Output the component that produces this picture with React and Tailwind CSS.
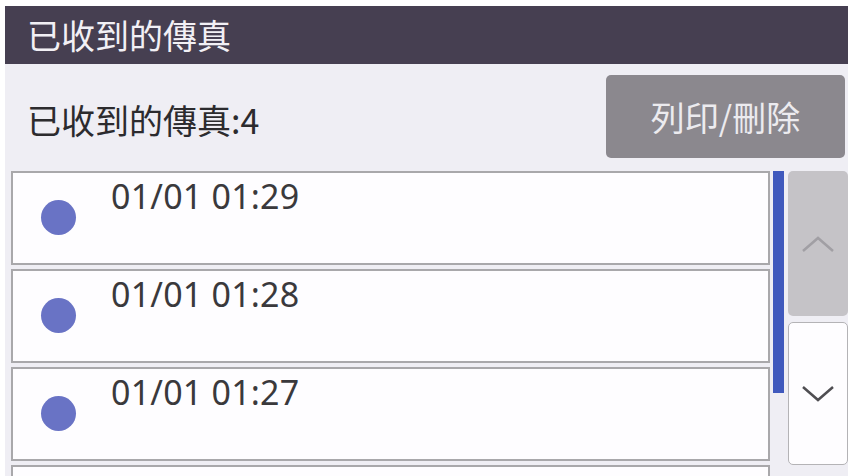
import React from "react";

const cjk = { fontFamily: '"Noto Sans CJK TC", "Noto Sans", sans-serif' };
const latin = { fontFamily: '"Noto Sans", "Open Sans", sans-serif' };

function Row({ time }) {
  return (
    <div className="flex h-[94px] w-[759px] shrink-0 border-2 border-[#a9a8ab] bg-[#fefdff] pl-[28px]">
      <div className="mt-[27px] h-[35px] w-[35px] rounded-full bg-[#6973c5]" />
      {time ? (
        <div
          className="ml-[35px] mt-[6px] text-[34px] leading-[34px] tracking-[0.2px] text-[#3a393c]"
          style={latin}
        >
          {time}
        </div>
      ) : null}
    </div>
  );
}

export default function App() {
  return (
    <div className="h-[476px] w-[853px] overflow-hidden bg-white px-[5px] pt-[6px]">
      <div className="flex h-full flex-col bg-[#efeef4]">
        <div
          className="flex h-[58px] shrink-0 items-center bg-[#463f51] pl-[22px] text-[34px] leading-[40px] text-[#f2f0f5]"
          style={cjk}
        >
          已收到的傳真
        </div>
        <div className="flex h-[107px] shrink-0 items-start justify-between pl-[22px] pr-[3px] pt-[11px]">
          <div
            className="mt-[25px] text-[34px] leading-[40px] text-[#2c2b2e]"
            style={cjk}
          >
            已收到的傳真:4
          </div>
          <div
            className="flex h-[83px] w-[239px] items-center justify-center rounded-[5px] bg-[#8b888e] text-[34px] leading-[40px] text-[#ecebef]"
            style={cjk}
          >
            列印/刪除
          </div>
        </div>
        <div className="flex min-h-0 flex-1 pl-[6px]">
          <div className="flex flex-col gap-[4px]">
            <Row time="01/01 01:29" />
            <Row time="01/01 01:28" />
            <Row time="01/01 01:27" />
            <Row time="" />
          </div>
          <div className="ml-[3px] h-[222px] w-[11px] bg-[#4059bd]" />
          <div className="ml-[4px] flex w-[60px] flex-col">
            <div className="flex h-[145px] items-center justify-center rounded-[5px] bg-[#c5c3c7]">
              <svg width="34" height="18" viewBox="0 0 34 18">
                <polyline
                  points="2,16 17,3 32,16"
                  fill="none"
                  stroke="#a19fa4"
                  strokeWidth="2.5"
                />
              </svg>
            </div>
            <div className="mt-[6px] flex h-[143px] items-center justify-center rounded-[5px] border border-[#b4b3b6] bg-[#fefdff]">
              <svg width="34" height="18" viewBox="0 0 34 18">
                <polyline
                  points="2,2 17,15 32,2"
                  fill="none"
                  stroke="#4f4e52"
                  strokeWidth="2.5"
                />
              </svg>
            </div>
          </div>
        </div>
      </div>
    </div>
  );
}
